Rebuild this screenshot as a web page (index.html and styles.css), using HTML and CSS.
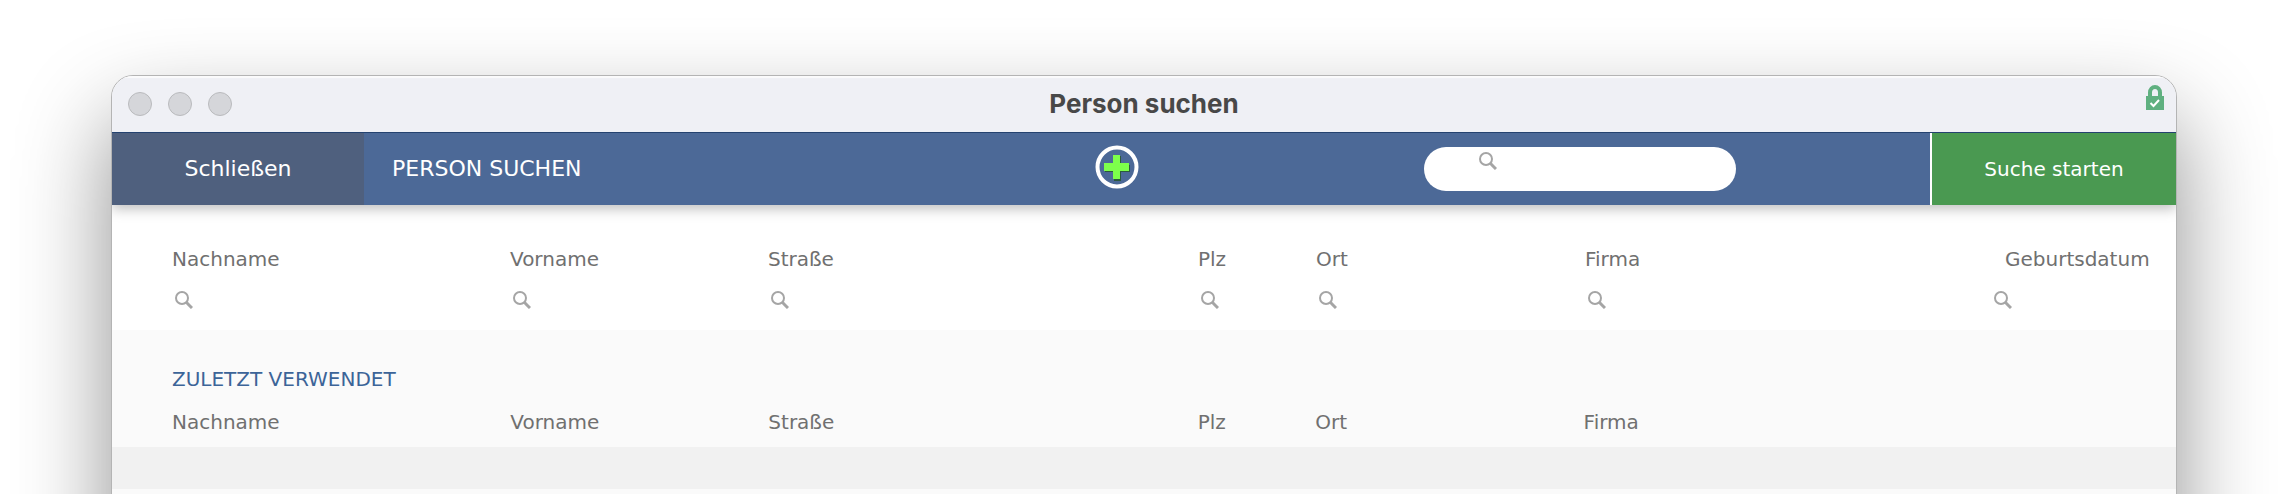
FILE: index.html
```html
<!DOCTYPE html>
<html lang="de">
<head>
    <meta charset="UTF-8">
    <title>Person suchen</title>
    <link rel="stylesheet" href="styles.css">
</head>
<body>
    <!-- Lupe, wird unten mehrfach verwendet -->
    <svg class="symbols">
        <symbol id="lupe" viewBox="0 0 18 18">
            <circle cx="7" cy="7" r="6" fill="none" stroke="#a5a5a5" stroke-width="2"/>
            <path d="M11 11L17 17" stroke="#a5a5a5" stroke-width="3"/>
        </symbol>
    </svg>

    <div class="window">
        <header class="titlebar">
            <div class="dots">
                <span class="dot"></span>
                <span class="dot"></span>
                <span class="dot"></span>
            </div>
            <h1>Person suchen</h1>
            <svg class="lock" viewBox="0 0 18 25">
                <path d="M4 12V7.500a5 5.500 0 0 1 10 0V12" fill="none" stroke="#5fb080" stroke-width="4"/>
                <rect y="11" width="18" height="14" fill="#5fb080"/>
                <path d="M4.500 18L7.500 21L13 15" fill="none" stroke="#fff" stroke-width="2"/>
            </svg>
        </header>

        <nav class="toolbar">
            <button class="btn-close" type="button">Schließen</button>
            <h2>PERSON SUCHEN</h2>
            <button class="btn-add" type="button" aria-label="Neue Person">
                <svg viewBox="0 0 44 44">
                    <circle cx="22" cy="22" r="19.500" fill="none" stroke="#fff" stroke-width="4"/>
                    <path d="M19 11h7v9h9v7h-9v9h-7v-9h-9v-7h9z" fill="#2c5a3c"/>
                    <path d="M18 10h7v8h9v8h-9v8h-7v-8h-9v-8h9z" fill="#7dff4b"/>
                </svg>
            </button>
            <label class="quick-search">
                <svg class="lupe"><use href="#lupe"/></svg>
                <input type="text" aria-label="Suche">
            </label>
            <button class="btn-start" type="submit" form="searchForm">Suche starten</button>
        </nav>

        <form id="searchForm" class="search-form">
            <div class="field">
                <label for="nachname">Nachname</label>
                <div class="box"><svg class="lupe"><use href="#lupe"/></svg><input type="text" id="nachname"></div>
            </div>
            <div class="field">
                <label for="vorname">Vorname</label>
                <div class="box"><svg class="lupe"><use href="#lupe"/></svg><input type="text" id="vorname"></div>
            </div>
            <div class="field">
                <label for="strasse">Straße</label>
                <div class="box"><svg class="lupe"><use href="#lupe"/></svg><input type="text" id="strasse"></div>
            </div>
            <div class="field">
                <label for="plz">Plz</label>
                <div class="box"><svg class="lupe"><use href="#lupe"/></svg><input type="text" id="plz"></div>
            </div>
            <div class="field">
                <label for="ort">Ort</label>
                <div class="box"><svg class="lupe"><use href="#lupe"/></svg><input type="text" id="ort"></div>
            </div>
            <div class="field">
                <label for="firma">Firma</label>
                <div class="box"><svg class="lupe"><use href="#lupe"/></svg><input type="text" id="firma"></div>
            </div>
            <div class="field date">
                <label for="geburtsdatum">Geburtsdatum</label>
                <div class="box"><svg class="lupe"><use href="#lupe"/></svg><input type="text" id="geburtsdatum"></div>
            </div>
        </form>

        <section class="recent">
            <h3>ZULETZT VERWENDET</h3>
            <table>
                <thead>
                    <tr>
                        <th class="c-nachname">Nachname</th>
                        <th class="c-vorname">Vorname</th>
                        <th class="c-strasse">Straße</th>
                        <th class="c-plz">Plz</th>
                        <th class="c-ort">Ort</th>
                        <th>Firma</th>
                    </tr>
                </thead>
                <tbody>
                    <tr><td colspan="6"></td></tr>
                    <tr><td colspan="6"></td></tr>
                </tbody>
            </table>
        </section>
    </div>
</body>
</html>
```
FILE: styles.css
```css
* {
    box-sizing: border-box;
}

html {
    overflow: hidden;
}

body {
    margin: 0;
    height: 100vh;
    padding: 75px 111px 0;
    overflow: hidden;
    background-color: #fff;
    color: #707070;
    font-family: Verdana, "DejaVu Sans", sans-serif;
    font-size: 20px;
    line-height: 24px;
}

h1, h2, h3 {
    margin: 0;
    font-weight: normal;
}

button, input {
    font: inherit;
    border: none;
    padding: 0;
    background: none;
}

.symbols {
    display: none;
}

.window {
    min-height: 100vh;
    border: 1px solid #b4b4b4;
    border-radius: 22px;
    overflow: hidden;
    background-color: #fafafa;
    box-shadow: 0 44px 92px rgba(0, 0, 0, 0.44);
}

/* Titelleiste */
.titlebar {
    position: relative;
    z-index: 1;
    display: grid;
    grid-template-columns: 1fr auto 1fr;
    align-items: center;
    height: 56px;
    padding: 0 12px;
    background-color: #eff0f5;
    box-shadow: inset 0 2px 1px #fbfbfc;
}

.titlebar h1 {
    font-family: Inter, sans-serif;
    font-size: 26px;
    font-weight: bold;
    color: #484848;
}

.dots {
    display: flex;
    gap: 16px;
    padding-left: 4px;
}

.dot {
    width: 24px;
    height: 24px;
    border: 1px solid #b9babd;
    border-radius: 50%;
    background-color: #d5d6da;
}

.lock {
    width: 18px;
    height: 25px;
    justify-self: end;
    align-self: start;
    margin-top: 9px;
}

/* Werkzeugleiste */
.toolbar {
    position: relative;
    display: grid;
    grid-template-columns: 252px 731fr 44px 285fr 312px 194fr 246px;
    align-items: center;
    height: 73px;
    border-top: 1px solid #24426f;
    background-color: #4c6997;
    box-shadow: 0 4px 12px rgba(0, 0, 0, 0.25);
    color: #fff;
}

.toolbar button {
    color: #fff;
    cursor: pointer;
}

.toolbar h2 {
    padding-left: 28px;
    font-size: 22px;
}

.toolbar .btn-close {
    height: 100%;
    background-color: #4f607e;
    font-size: 22px;
}

.btn-add {
    height: 44px;
    margin-bottom: 4px;
}

.btn-add svg {
    display: block;
    width: 44px;
    height: 44px;
}

.quick-search {
    grid-column: 5;
    display: flex;
    height: 44px;
    padding: 5px 55px;
    border-radius: 22px;
    background-color: #fff;
}

.lupe {
    flex: none;
    width: 18px;
    height: 18px;
}

.quick-search input, .box input {
    flex: 1;
    min-width: 0;
    height: 18px;
    outline: none;
}

.toolbar .btn-start {
    grid-column: 7;
    height: 100%;
    border-left: 2px solid #fff;
    background-color: #4a9951;
}

/* Suchfelder */
.search-form {
    display: grid;
    grid-template-columns: 338fr 258fr 430fr 118fr 269fr 406fr 185fr;
    height: 125px;
    padding: 42px 0 0 60px;
    background-color: #fff;
}

.field {
    min-width: 0;
}

.field label {
    display: block;
}

.box {
    display: flex;
    padding: 20px 3px 0;
}

.date label {
    padding-left: 14px;
}

/* Zuletzt verwendet */
.recent h3 {
    padding: 37px 60px 0;
    font-size: 20px;
    color: #3c6498;
}

.recent table {
    width: 100%;
    table-layout: fixed;
    border-collapse: collapse;
}

.recent th {
    height: 56px;
    padding: 6px 0 0;
    font-weight: normal;
    text-align: left;
}

.recent th:first-child {
    padding-left: 60px;
}

.recent td {
    height: 42px;
    padding: 0;
}

.recent tbody tr:nth-child(odd) {
    background-color: #f1f1f1;
}

.c-nachname {
    width: 19.300%;
}

.c-vorname {
    width: 12.500%;
}

.c-strasse {
    width: 20.800%;
}

.c-plz {
    width: 5.700%;
}

.c-ort {
    width: 13%;
}
```
